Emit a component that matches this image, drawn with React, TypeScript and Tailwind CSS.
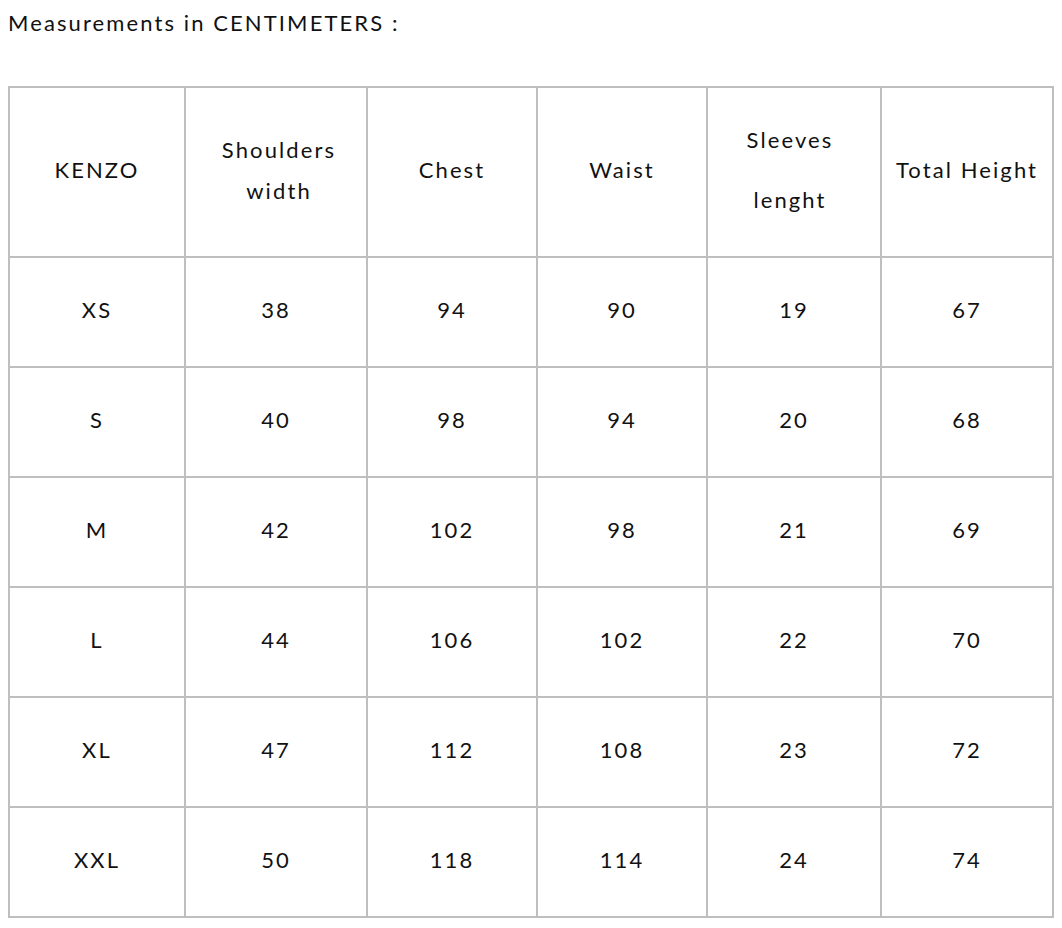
import React from "react";

const rows = [
  ["XS", "38", "94", "90", "19", "67"],
  ["S", "40", "98", "94", "20", "68"],
  ["M", "42", "102", "98", "21", "69"],
  ["L", "44", "106", "102", "22", "70"],
  ["XL", "47", "112", "108", "23", "72"],
  ["XXL", "50", "118", "114", "24", "74"],
];

export default function App() {
  const cell = "border-2 border-[#bfbfbf] text-center align-middle pt-0 pb-[5px] px-0 font-normal";
  return (
    <div className="bg-white min-h-[928px] px-[8px] text-[#111] font-['Lato','Liberation_Sans',sans-serif] font-normal tracking-[2.1px]">
      <p className="text-[22px] leading-[46px]">Measurements in CENTIMETERS :</p>
      <table className="mt-[40px] w-[1046px] table-fixed border-collapse text-[22px]">
        <colgroup>
          <col className="w-[176px]" />
          <col className="w-[182px]" />
          <col className="w-[170px]" />
          <col className="w-[170px]" />
          <col className="w-[174px]" />
          <col className="w-[172px]" />
        </colgroup>
        <thead>
          <tr className="h-[170px]">
            <th className={cell}>KENZO</th>
            <th className={`${cell} leading-[41px] pl-[6px]`}>
              Shoulders
              <br />
              width
            </th>
            <th className={cell}>Chest</th>
            <th className={cell}>Waist</th>
            <th className={`${cell} leading-[60px] pr-[8px] pb-[3px]`}>
              Sleeves
              <br />
              lenght
            </th>
            <th className={cell}>Total Height</th>
          </tr>
        </thead>
        <tbody>
          {rows.map((r) => (
            <tr key={r[0]} className="h-[110px]">
              {r.map((v, i) => (
                <td key={i} className={cell}>
                  {v}
                </td>
              ))}
            </tr>
          ))}
        </tbody>
      </table>
    </div>
  );
}
